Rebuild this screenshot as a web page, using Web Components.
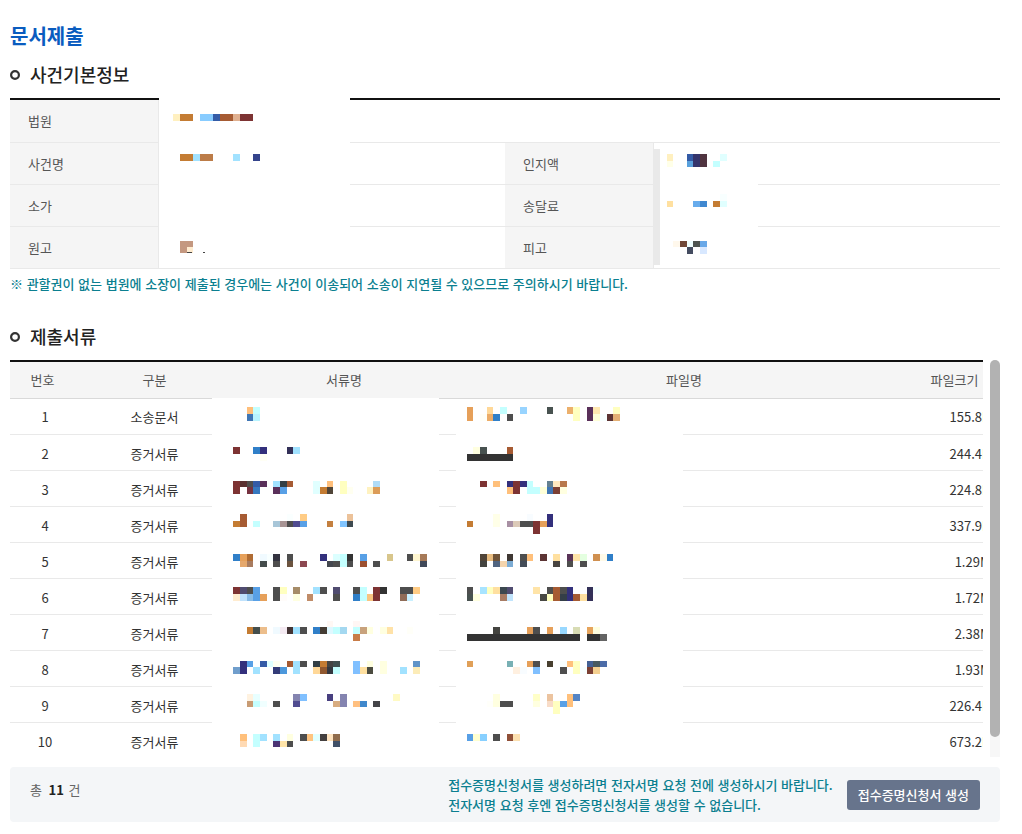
<!DOCTYPE html>
<html lang="ko">
<head>
<meta charset="utf-8">
<meta name="viewport" content="width=device-width, initial-scale=1">
<title>문서제출</title>
<style>
body { margin: 0; background: #fff; color: #333; font: 13px/20px "Noto Sans CJK KR", "Noto Sans", sans-serif; }
</style>
</head>
<body>
<submit-page></submit-page>

<template id="t-page">
<style>
:host { display: block; padding: 20px 22px 12px 10px; }
h1 { margin: 0; font-size: 20px; line-height: 32px; font-weight: 700; color: #0a5cbf; }
.note { margin: 5px 0 0; color: #0b7f90; font-weight: 500; }
section-title { margin-top: 8px; }
section-title.second { margin-top: 28px; }
summary-bar { margin-top: 10px; }
</style>
<main>
<h1>문서제출</h1>
<section-title>사건기본정보</section-title>
<case-info></case-info>
<p class="note">※ 관할권이 없는 법원에 소장이 제출된 경우에는 사건이 이송되어 소송이 지연될 수 있으므로 주의하시기 바랍니다.</p>
<section-title class="second">제출서류</section-title>
<document-list></document-list>
<summary-bar count="11">
<span>접수증명신청서를 생성하려면 전자서명 요청 전에 생성하시기 바랍니다.<br>전자서명 요청 후엔 접수증명신청서를 생성할 수 없습니다.</span>
<action-button slot="action">접수증명신청서 생성</action-button>
</summary-bar>
</main>
</template>

<template id="t-title">
<style>
:host { display: block; padding-bottom: 8px; }
h2 { display: flex; align-items: center; gap: 10px; height: 30px; margin: 0; font-size: 18px; line-height: 28px; font-weight: 500; color: #222; }
span { padding-bottom: 2px; }
svg { flex: none; display: block; }
</style>
<h2><svg width="10" height="10" viewBox="0 0 10 10" aria-hidden="true"><circle cx="5" cy="5" r="3.9" fill="none" stroke="#333" stroke-width="2.2"/></svg><span><slot></slot></span></h2>
</template>

<template id="t-info">
<style>
:host { display: block; position: relative; }
table { width: 100%; table-layout: fixed; border-collapse: separate; border-spacing: 0; border-top: 2px solid #111; }
th, td { box-sizing: border-box; height: 42px; padding: 0 18px; border-bottom: 1px solid #e9e9e9; text-align: left; }
tr:first-child > * { height: 43px; }
th { background: #f5f5f5; border-right: 1px solid #e9e9e9; color: #555; font-weight: 400; }
.narrow { width: 15%; } .wide { width: 35%; }
.left { position: absolute; left: 149px; top: 0; width: 191px; height: 155px; }
.right { position: absolute; left: 650px; top: 51px; width: 98px; height: 116px; }
.edge { position: absolute; left: 643px; top: 51px; width: 7px; height: 116px; background: #e9e9e9; }
</style>
<table>
<colgroup><col class="narrow"><col class="wide"><col class="narrow"><col class="wide"></colgroup>
<tbody>
<tr><th scope="row">법원</th><td colspan="3"></td></tr>
<tr><th scope="row">사건명</th><td></td><th scope="row">인지액</th><td></td></tr>
<tr><th scope="row">소가</th><td></td><th scope="row">송달료</th><td></td></tr>
<tr><th scope="row">원고</th><td></td><th scope="row">피고</th><td></td></tr>
</tbody>
</table>
<mosaic-patch class="left" data-key="infoLeft" data-x="159" data-y="98"></mosaic-patch>
<div class="edge"></div>
<mosaic-patch class="right" data-key="infoRight" data-x="660" data-y="149"></mosaic-patch>
</template>

<template id="t-docs">
<style>
:host { display: flex; justify-content: space-between; position: relative; }
.view { width: calc(100% - 17px); max-height: 397px; overflow: hidden; }
table { width: calc(100% + 17px); table-layout: fixed; border-collapse: separate; border-spacing: 0; border-top: 2px solid #111; }
th, td { box-sizing: border-box; height: 36px; padding: 0; border-bottom: 1px solid #e9e9e9; text-align: center; white-space: nowrap; }
th { height: 37px; background: #f5f5f5; border-bottom-color: #d9d9d9; color: #555; font-weight: 400; }
th:first-child { padding-right: 5px; }
tr + tr td { padding-top: 2px; }
td:last-child { padding-right: 1px; text-align: right; }
.c1 { width: 70px; } .c2 { width: 149px; } .c3 { width: 230px; } .c5 { width: 91px; }
.bar { width: 10px; background: #f7f7f7; border-radius: 5px 5px 0 0; }
.thumb { height: 95%; background: #b2b2b2; border-radius: 5px; }
.names { position: absolute; left: 202px; top: 38px; width: 227px; height: 359px; }
.files { position: absolute; left: 446px; top: 39px; width: 227px; height: 358px; }
</style>
<div class="view">
<table>
<colgroup><col class="c1"><col class="c2"><col class="c3"><col><col class="c5"></colgroup>
<thead><tr><th scope="col">번호</th><th scope="col">구분</th><th scope="col">서류명</th><th scope="col">파일명</th><th scope="col">파일크기</th></tr></thead>
<tbody></tbody>
</table>
</div>
<div class="bar"><div class="thumb"></div></div>
<mosaic-patch class="names" data-key="names" data-x="212" data-y="398"></mosaic-patch>
<mosaic-patch class="files" data-key="files" data-x="456" data-y="399"></mosaic-patch>
</template>

<template id="t-summary">
<style>
:host { display: flex; align-items: flex-start; box-sizing: border-box; min-height: 55px; padding: 0 20px; background: #f4f6f8; border-radius: 4px; }
.count { margin: 13px auto 0 0; color: #666; }
.count b { margin: 0 1px 0 3px; color: #222; }
.hint { margin: 8px 14px 0 0; color: #0b7f90; font-weight: 500; }
.action { margin-top: 13px; }
</style>
<p class="count">총 <b></b> 건</p>
<div class="hint"><slot></slot></div>
<div class="action"><slot name="action"></slot></div>
</template>

<template id="t-button">
<style>
:host { display: block; }
button { display: block; height: 30px; padding: 0 11px; border: 0; border-radius: 3px; background: #67748c; color: #fff; font: inherit; font-weight: 500; white-space: nowrap; cursor: pointer; }
</style>
<button type="button"><slot></slot></button>
</template>

<template id="t-mosaic">
<style>
:host { display: block; background: #fff; overflow: hidden; }
svg { display: block; width: 100%; height: 100%; }
</style>
<svg aria-hidden="true" shape-rendering="crispEdges"></svg>
</template>

<script>
// Each line is a mosaic row: "row | column colour, column-column colour, ..."
const MOSAICS = {
infoLeft: `17|26 fff0c0,27-28 c47c33,30-31 88ccff,32 345ba6,33-34 a65b33,35 e0b090,36-37 7d3333
23|27-28 c47c33,29 a2e2ff,30-31 bc7c48,35 a2e2ff,38 34448c
36|27-28 c49880
37|27 c49880,28 ffecd0`,
infoRight: `23|100 fff0c0,103 345ba6,104 34346c,105 503440,108 e0ffff
24|100 ffffe8,103 58a0dc,104 34346c,105 503440,107 c4ffff
29|108 f8ffff
30|100 ffe0a0,104 68acec,105 4088d0,107 c47c33,108 e0ffff
36|101 fff8ec,102 704838,103 f0ffff,104 4e5450,105 68a8e8
37|103 444c60,105 d8e8ff`,
names: `61|37 ffbf7b,38 c4ffff
62|37 4076b4,38 b8f4ff
67|35 7d3333,38 307fc8,39 33307c,43 333058,44 a2e2ff
68|39 fffff5
72|35 7d3333,36 5a3030,37 504e4c,38 345ba6,39 5a305a,41 a2e2ff,42 333f45,43 a65b33,47 e0ffff,49 ffbf7b,51 ffffc0,56 b0dcf8
73|35 7d3333,37 763240,38 3678bf,41 5a305a,42 58a0e6,47 e0ffff,48 c47c33,49 504538,51 ffffc0,52 fffff0,55 fff2c0,56 dc9c58
77|36 a65b33,43 faffff,45 ffcc85,52 ecc29a
78|35 c47c33,36 a65b33,38 c4ffff,41 a8c6d8,42 a89494,43 4e4e4e,44 504c90,45 58a0e6,49 c4803f,51 80c4ff,52 3e4a50
83|35 307fc8,36 e6a05a,37 b06c33,39 f0faff,40 f8ffff,41 333340,43 4e4e4e,48 33307c,50 dcffff,51 c4ffff,52 333333,54 58a0e6,58 d8c68c,61 4e4e4e,62 fff6d0,63 a67a58
84|36 e6a86c,37 a87c60,39 444c4c,41 4e4e4e,43 6c5440,45 8c4850,49 444850,50 4e4e4e,51 c4ffff,52 4e4e4e,54 9c5030,56 4e4e4e,63 404858
88|35 7d3333,36 504c70,37 4e4e4e,38 58a0e6,41 4e4e4e,42 ffffc0,44 a68c68,47 a2e2ff,48 4e4e4e,50 504c70,53 4e4e4e,54 c4ffff,56 7d3333,57 333333,60-61 4e4e4e,62 ffcc85
89|35 ffecd0,36 c0e2fc,37 88bce8,38 58a0e6,39 e6a05a,41 4e4e4e,42 fffcfa,44 ffffe0,46 c08c68,50 4e4e4e,53 307fc8,54 c4ffff,55 f8c480,56 7d3333,60 906c58,61 c8f0ff
93|49 fff8f4,53 fff6f4
94|37 c47c33,38 444e4c,39 ecbe8c,41 f0faff,42 f4eaf2,43 443434,44 a2e2ff,45 4e4e4e,47 307fc8,48 443c34,49 e0f8ff,50 c4ffff,51 a4d8f0,53 c4ffff,54 c8a27c,55 ffffe0,57 ffffe0,58 ffe2a8,61 fffff8
95|53 c87c48
99|36 33307c,37 58a0e6,39 345ba6,40 e0ffff,41 fffff0,43 a65b33,44 a2e2ff,45 4e4e4e,47 333f45,48 c47c33,49 444444,50 405050,53 80c0ff,55 ffffe0,57 ffffe0,62 6094c8
100|35 709ecc,36 33307c,38 a2e2ff,41 343c78,42 4c98dc,44 a2e2ff,47 ffd898,48 905830,49 343840,50 c4ffff,53 80c0ff,54 ffe0a0,55 4c4c40,57 ffffe0,60 a2e2ff,62 fcecb8
104|37 fff2e0,38 e8ffff,44 8484b0,45 80c0ff,49 484080,51 8484b0,59 fffac4
105|37 c89c74,38 c4ffff,39 f0ffff,41 4e4e4e,44 504c90,50 d8ac80,51 8484b0,53 ffc080,54 4088cc,56 444448
110|36 ffc07b,38 c4ffff,39 a2e2ff,41 a2e2ff,43 ffffe0,45 4e4e4e,46 ffc480,47 e0ffff,48 444040,49 ffe4c0,50 906c4c
111|36 ffdab4,38 c4ffff,41 4c3474,42 ffe4a8,43 4e4e4e,50 405068`,
files: `61|70 e6a05a,73 ffd898,75 c4ffff,78 98d4ff,82 485250,85 ecb06c,86 ffffc0,88 5a305a,89 ffe8b0,92 ffffc0
62|70 e6a05a,72 fffff8,73 ecac68,74 307fc8,76 4e4e4e,86 ffffc0,88 5a305a,89 ffffd8,90 f8ffff,91 5c3434,92 e4b074
67|71 ffffe0,72 485250,76 a65b33
68|70-76 333333
72|72 7d3333,74 ffc07b,76 33307c,77 7d3333,78 33307c,79 c4ffff,82 648090,83 ffe8c0,84 b8784c
73|76 ffc07b,77 7d3333,79-80 c4ffff,81 ffffd8,82 4076b4,83 7c4034,84 ffffe0
77|74 ffffe8,79 f8fcff,82 33307c
78|70 c47c33,74 ffffe8,76 a890a4,77 dccab8,78-79 4e4e4e,80 7d3333,81 e6a05a,82 33307c
79|80 7d3333
83|72 504438,73 e8bc80,74 705438,76 403834,78 4e4e4e,79 ffc07b,81 5c3434,83 ffe0a0,85 5a3458,86 ffe4a8,87 e4ffe0,89 d09050,90 fffae8,91 307fc8
84|72 444440,74 506480,75 f4d4ac,76 7cacd4,78 444c58,83 484440,85 4e4e4e,87 4e4e4e
88|70 4e4e4e,72 a8e4ff,73 ffffc0,74 ffe0a0,75 3c4850,76 504c70,80 ffe4a8,82 4e4e4e,83 a65b33,84 4e4e4e,85 33307c,88 333058,89 f8ffff
89|70 485250,71 ffffe0,75 a87c64,76 c0e4fc,81 484844,82 ffffc0,83 a65b33,84 343e48,85 33307c,86 a65b33,87 ffe0a0,88 333058
94|74 444440,79 e6a05a,80 4e4e4e,82 e6a05a,84 98d8ff,86 d8dcb4,88 e6a45c,89 ffffe0
95|70-86 333333,88-89 333333,90 646464
99|70 e0a058,76 78b0b4,79 e6a05a,80 4e4e4e,82 484030,84 f8ffff,85 ffc07b,86 ffffc0,88 446094,89 485a60,90 4c6ca8
100|77 fff0e0,78 f8fcff,80 80c0ff,84 4e4e4e,86 ffffc0,87 f8ffff,88 7c4034,89 f4d090
104|74 ffffe0,80 ffffc8,82 ecc4a0,85 ffc07b,86 5484c4
105|73 fffffa,74 ffffe0,75-76 4e4e4e,80 ffffe0,82 f8dcc8,83 ffffc0,84 58a0e6,85 ffc07b
106|83 ffffc0
110|70 58a0e6,71 ffffd0,72 88d0ff,74 4e4e4e,76 905038,77 fce0b0`
};

class Base extends HTMLElement {
  constructor() {
    super();
    this.attachShadow({ mode: "open" }).append(
      document.getElementById(this.constructor.template).content.cloneNode(true));
  }
}

class MosaicPatch extends Base {
  static template = "t-mosaic";
  connectedCallback() {
    const svg = this.shadowRoot.querySelector("svg");
    const { key, x: ox, y: oy } = this.dataset;
    const px = k => Math.round(k * 20 / 3) - ox;
    const py = k => Math.round((k * 20 + 2) / 3) - oy;
    const rect = (x, y, w, h, fill) =>
      `<rect x="${x}" y="${y}" width="${w}" height="${h}" fill="${fill}"/>`;
    let out = "";
    for (const line of MOSAICS[key].split("\n")) {
      const [row, cells] = line.split("|");
      const y = py(+row), h = py(+row + 1) - y;
      for (const cell of cells.split(",")) {
        const [span, colour] = cell.split(" ");
        const [from, to = from] = span.split("-");
        out += rect(px(+from), y, px(+to + 1) - px(+from), h, "#" + colour);
      }
    }
    // Lower tips of the masked name show under the mosaic.
    if (key === "infoLeft") out += rect(28, 154, 5, 1, "#444") + rect(44, 154, 2, 1, "#444");
    svg.innerHTML = out;
  }
}

class SectionTitle extends Base { static template = "t-title"; }
class CaseInfo extends Base { static template = "t-info"; }
class ActionButton extends Base { static template = "t-button"; }

class DocumentList extends Base {
  static template = "t-docs";
  connectedCallback() {
    const sizes = ["155.8KB", "244.4KB", "224.8KB", "337.9KB", "1.29MB", "1.72MB", "2.38MB", "1.93MB", "226.4KB", "673.2KB"];
    this.shadowRoot.querySelector("tbody").innerHTML = sizes.map((size, i) =>
      `<tr><td>${i + 1}</td><td>${i ? "증거서류" : "소송문서"}</td><td></td><td></td><td>${size}</td></tr>`).join("");
  }
}

class SummaryBar extends Base {
  static template = "t-summary";
  connectedCallback() {
    this.shadowRoot.querySelector("b").textContent = this.getAttribute("count");
  }
}

class SubmitPage extends Base { static template = "t-page"; }

customElements.define("mosaic-patch", MosaicPatch);
customElements.define("section-title", SectionTitle);
customElements.define("case-info", CaseInfo);
customElements.define("action-button", ActionButton);
customElements.define("document-list", DocumentList);
customElements.define("summary-bar", SummaryBar);
customElements.define("submit-page", SubmitPage);
</script>
</body>
</html>
